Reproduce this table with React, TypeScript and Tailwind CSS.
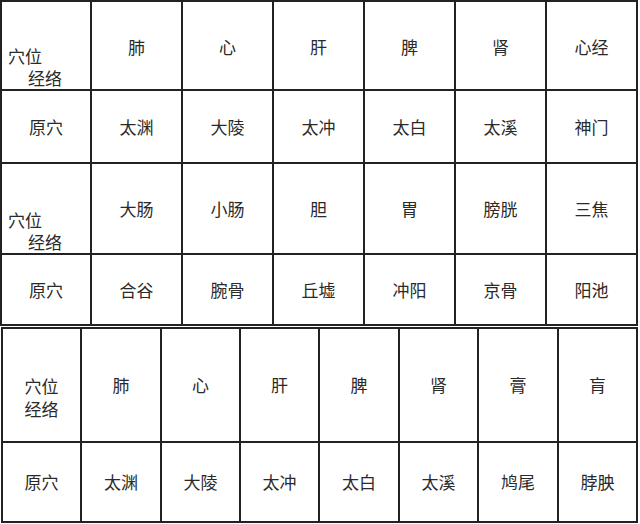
import React from 'react';

const font = { fontFamily: '"Noto Sans CJK SC", "Noto Sans", sans-serif' };

const topRows = [
  { head: ['肺', '心', '肝', '脾', '肾', '心经'], yuan: ['太渊', '大陵', '太冲', '太白', '太溪', '神门'] },
  { head: ['大肠', '小肠', '胆', '胃', '膀胱', '三焦'], yuan: ['合谷', '腕骨', '丘墟', '冲阳', '京骨', '阳池'] },
];

const bottomHead = ['肺', '心', '肝', '脾', '肾', '膏', '肓'];
const bottomYuan = ['太渊', '大陵', '太冲', '太白', '太溪', '鸠尾', '脖胦'];

function Cell({ children, className = '' }: { children?: React.ReactNode; className?: string }) {
  return (
    <div className={`border-r-2 border-b-2 border-[#222] flex items-center justify-center text-[17px] leading-[22px] text-[#2a2a2a] ${className}`}>
      {children}
    </div>
  );
}

function CornerTop() {
  return (
    <Cell className="!items-start !justify-end flex-col">
      <span className="block h-[22px] pl-[6px]">穴位</span>
      <span className="block h-[22px] pl-[26px]">经络</span>
    </Cell>
  );
}

export default function App() {
  return (
    <div className="w-[640px] h-[524px] bg-white overflow-hidden" style={font}>
      {/* upper table */}
      <div className="w-[638px] border-l-2 border-t-2 border-[#222] grid grid-cols-[90px_repeat(6,91px)] grid-rows-[89px_73px_91px_71px]">
        {topRows.map((row, i) => (
          <React.Fragment key={i}>
            <CornerTop />
            {row.head.map((t) => (
              <Cell key={t} className={i === 0 ? 'pt-[2px]' : ''}>{t}</Cell>
            ))}
            <Cell>原穴</Cell>
            {row.yuan.map((t) => (
              <Cell key={t}>{t}</Cell>
            ))}
          </React.Fragment>
        ))}
      </div>

      {/* lower table */}
      <div className="mt-[1px] ml-[1px] w-[637px] border-l-2 border-t-2 border-[#222] grid grid-cols-[79px_80px_79px_79px_80px_79px_80px_79px] grid-rows-[114px_80px]">
        <Cell className="flex-col pt-[23px] !leading-[23px]">
          <span className="block h-[23px]">穴位</span>
          <span className="block h-[23px]">经络</span>
        </Cell>
        {bottomHead.map((t) => (
          <Cell key={t}>{t}</Cell>
        ))}
        <Cell>原穴</Cell>
        {bottomYuan.map((t) => (
          <Cell key={t}>{t}</Cell>
        ))}
      </div>
    </div>
  );
}
